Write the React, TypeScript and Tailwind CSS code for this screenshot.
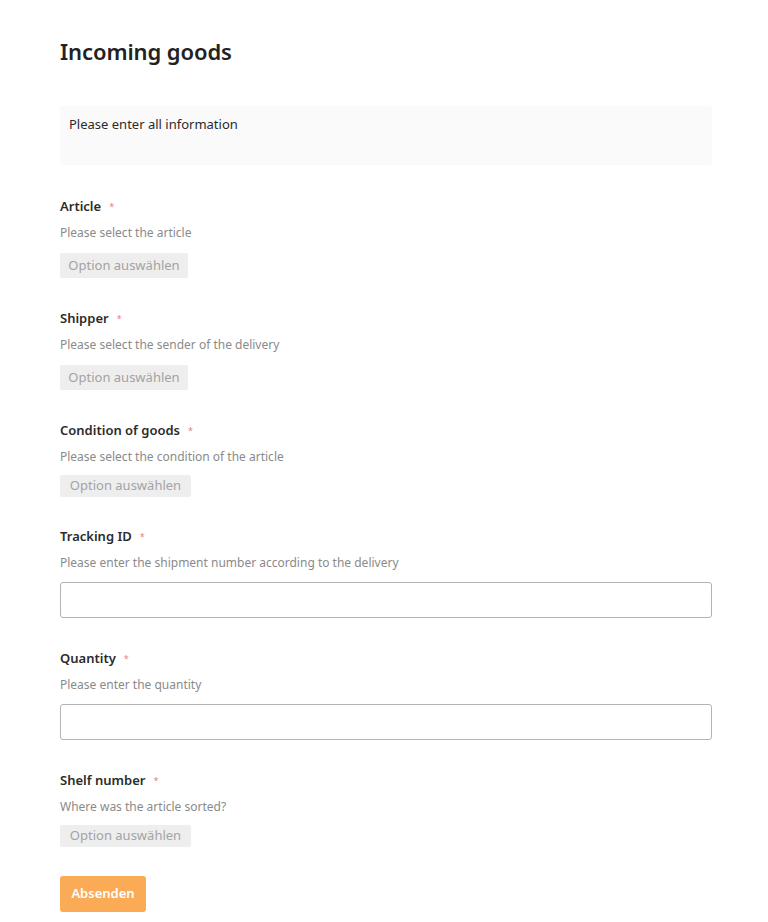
import React from 'react';

type Field = {
  label: string;
  hint: string;
  kind: 'select' | 'input';
  top: string;
  btn: string;
};

const fields: Field[] = [
  { label: 'Article', hint: 'Please select the article', kind: 'select', top: 'mt-[32px]', btn: 'mt-[11px] w-[128px] h-[25px]' },
  { label: 'Shipper', hint: 'Please select the sender of the delivery', kind: 'select', top: 'mt-[31px]', btn: 'mt-[11px] w-[128px] h-[25px]' },
  { label: 'Condition of goods', hint: 'Please select the condition of the article', kind: 'select', top: 'mt-[31px]', btn: 'mt-[9px] w-[131px] h-[22px]' },
  { label: 'Tracking ID', hint: 'Please enter the shipment number according to the delivery', kind: 'input', top: 'mt-[30px]', btn: '' },
  { label: 'Quantity', hint: 'Please enter the quantity', kind: 'input', top: 'mt-[31px]', btn: '' },
  { label: 'Shelf number', hint: 'Where was the article sorted?', kind: 'select', top: 'mt-[31px]', btn: 'mt-[9px] w-[131px] h-[22px]' },
];

function FormField({ field }: { field: Field }) {
  return (
    <div className={field.top}>
      <div className="flex items-center h-[20px] text-[13px] font-semibold text-[#2b2b2b]">
        {field.label}
        <span className="ml-[8px] text-[9px] text-[#e0808f] font-normal">*</span>
      </div>
      <div className="mt-[7px] h-[18px] leading-[18px] text-[12px] text-[#8a8a8a]">{field.hint}</div>
      {field.kind === 'select' ? (
        <button
          type="button"
          className={`flex items-center justify-center rounded-[2px] bg-[#eeeeee] text-[13px] text-[#a3a3a3] ${field.btn}`}
        >
          Option auswählen
        </button>
      ) : (
        <input
          type="text"
          className="mt-[10px] block w-full h-[36px] rounded-[3px] border border-[#b3b3b3] bg-white px-2 text-[13px] outline-none"
        />
      )}
    </div>
  );
}

export default function App() {
  return (
    <div
      className="min-h-[922px] bg-white"
      style={{ fontFamily: '"Noto Sans", "Open Sans", sans-serif' }}
    >
      <div className="w-[652px] ml-[60px] pt-[36px]">
        <h1 className="h-[30px] leading-[30px] text-[22px] font-semibold text-[#222] tracking-[-0.1px]">
          Incoming goods
        </h1>
        <div className="mt-[40px] h-[59px] rounded-[3px] bg-[#fafafa] px-[9px] pt-[8px] text-[13px] leading-[20px] text-[#2b2b2b]">
          Please enter all information
        </div>
        {fields.map((f) => (
          <FormField key={f.label} field={f} />
        ))}
        <button
          type="button"
          className="mt-[29px] h-[36px] w-[86px] rounded-[3px] bg-[#fbab55] text-[13px] font-semibold text-white"
        >
          Absenden
        </button>
      </div>
    </div>
  );
}
